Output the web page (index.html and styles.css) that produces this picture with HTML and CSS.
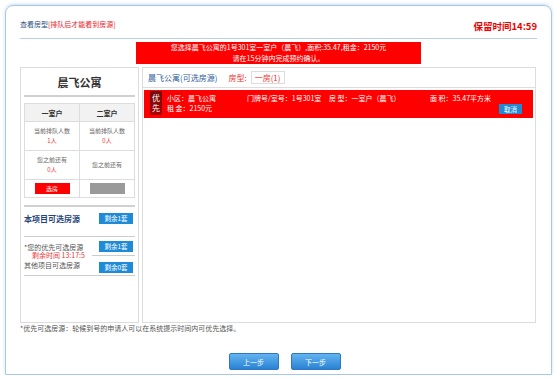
FILE: index.html
```html
<!DOCTYPE html>
<html lang="zh-CN">
<head>
    <meta charset="UTF-8">
    <meta name="viewport" content="width=device-width, initial-scale=1.0">
    <title>查看房型</title>
    <link rel="stylesheet" href="styles.css">
</head>
<body>

<div class="frame">
    <!-- Шапка: заголовок и таймер -->
    <div class="head">
        <div class="page-title">查看房型<span class="hint">[排队后才能看到房源]</span></div>
        <div class="timer">保留时间14:59</div>
    </div>

    <div class="notice">
        您选择晨飞公寓的1号301室一室户（晨飞）,面积:35.47,租金：2150元<br>
        请在15分钟内完成预约确认。
    </div>

    <div class="panels">
        <!-- Левая панель: очередь и остатки -->
        <div class="side">
            <div class="side-title">晨飞公寓</div>
            <table class="queue">
                <tr class="q-head">
                    <th>一室户</th>
                    <th>二室户</th>
                </tr>
                <tr class="q-row">
                    <td>当前排队人数<br><span class="red">1人</span></td>
                    <td>当前排队人数<br><span class="red">0人</span></td>
                </tr>
                <tr class="q-row">
                    <td>您之前还有<br><span class="red">0人</span></td>
                    <td>您之前还有</td>
                </tr>
                <tr class="q-btns">
                    <td><span class="pick">选房</span></td>
                    <td><span class="pick off"></span></td>
                </tr>
            </table>

            <div class="stock-main">
                <span>本项目可选房源</span>
                <span class="btn-blue">剩余1套</span>
            </div>
            <div class="stock-row">
                <span>*您的优先可选房源</span>
                <span class="stock-cell"><span class="btn-blue">剩余1套</span></span>
            </div>
            <div class="stock-row last">
                <span class="stock-text">
                    <span class="countdown">剩余时间 13:17:5</span>
                    <span>其他项目可选房源</span>
                </span>
                <span class="btn-blue">剩余0套</span>
            </div>
        </div>

        <!-- Правая панель: выбранные квартиры -->
        <div class="main">
            <div class="main-head">
                <span class="estate">晨飞公寓(可选房源)</span>
                <span class="type-label">房型:</span>
                <span class="type-tag">一房(1)</span>
            </div>
            <div class="room">
                <div class="badge">优<br>先</div>
                <div class="room-info">
                    <span>小区：晨飞公寓</span>
                    <span>门牌号/室号：1号301室</span>
                    <span>房 型：一室户（晨飞）</span>
                    <span>面 积：35.47平方米</span>
                    <span>租 金：2150元</span>
                    <span></span>
                    <span></span>
                    <span class="cancel-cell"><button class="cancel">取消</button></span>
                </div>
            </div>
        </div>
    </div>

    <div class="footnote">*优先可选房源：轮候到号的申请人可以在系统提示时间内可优先选择。</div>

    <div class="actions">
        <button class="step">上一步</button>
        <button class="step">下一步</button>
    </div>
</div>

</body>
</html>
```

FILE: styles.css
```css
body { margin: 0; font-family: "Noto Sans CJK SC", "Liberation Sans", sans-serif; font-size: 7px; color: #555; background: #fff; }

.frame {
    margin: 5px 0 0 5px;
    width: 547px;
    height: 370px;
    box-sizing: border-box;
    border: 1px solid #a6c8e3;
    border-radius: 8px 8px 0 0;
    padding: 0 14px;
    box-shadow: 0 -1px 3px rgba(150, 190, 225, 0.5);
}

/* Шапка */
.head {
    height: 33px;
    box-sizing: border-box;
    padding-top: 3px;
    border-bottom: 1px solid #b9cfe3;
    display: flex;
    justify-content: space-between;
    align-items: center;
}
.page-title { color: #2b4f7f; }
.page-title .hint { color: #e8232a; }
.timer { color: #e00; font-size: 9.5px; font-weight: bold; margin-top: 4px; }

.notice {
    width: 285px;
    height: 22px;
    margin: 3px auto 0;
    background: #f00;
    color: #fff;
    text-align: center;
    line-height: 11px;
}

.panels { display: flex; gap: 3px; margin-top: 3px; height: 256px; }

/* Левая панель */
.side { width: 119px; box-sizing: border-box; border: 1px solid #dcdcdc; padding: 0 3px; }
.side-title {
    padding-top: 1px;
    line-height: 26px;
    border-bottom: 2px solid #d0d0d0;
    font-size: 11px;
    font-weight: bold;
    color: #333;
    text-align: center;
}

.queue { margin-top: 6px; width: 100%; border-collapse: collapse; table-layout: fixed; }
.queue th, .queue td { border: 1px solid #ddd; text-align: center; padding: 0; font-size: 6px; line-height: 10px; color: #666; }
.queue th { background: #f2f2f2; color: #333; font-size: 7px; font-weight: bold; height: 17px; }
.queue .q-row td { height: 28px; }
.queue .q-btns td { height: 17px; }
.red { color: #e33; }
.pick { display: inline-block; width: 35px; height: 11px; line-height: 11px; background: #f00; color: #fff; vertical-align: middle; }
.pick.off { background: #9a9a9a; }

.stock-main {
    margin-top: 7px;
    border-top: 2px solid #d0d0d0;
    border-bottom: 1px solid #ccc;
    height: 32px;
    box-sizing: border-box;
    padding-bottom: 6px;
    display: flex;
    justify-content: space-between;
    align-items: center;
    font-size: 8px;
    font-weight: bold;
    color: #1f4478;
}
.btn-blue {
    display: inline-block;
    width: 34px;
    height: 11px;
    line-height: 11px;
    margin-right: 2px;
    background: #1f8bd6;
    color: #fff;
    font-size: 6.5px;
    font-weight: normal;
    text-align: center;
}

.stock-row { display: flex; justify-content: space-between; align-items: center; height: 19px; }
.stock-cell { width: 43px; height: 19px; box-sizing: border-box; border-bottom: 1px solid #ccc; display: flex; align-items: center; justify-content: flex-end; }
.stock-row.last { height: 20px; box-sizing: border-box; border-bottom: 1px solid #ccc; align-items: flex-end; padding-bottom: 2px; }
.stock-text { display: flex; flex-direction: column; line-height: 10px; align-self: flex-start; margin-top: -6px; }
.countdown { color: #e33; padding-left: 8px; }

/* Правая панель */
.main { flex: 1; border: 1px solid #dcdcdc; margin-right: 1px; }
.main-head {
    height: 19px;
    border-bottom: 1px solid #ddd;
    display: flex;
    align-items: center;
    padding-left: 5px;
    font-size: 8px;
}
.estate { color: #2f5d99; }
.type-label { color: #e33; margin-left: 11px; }
.type-tag { color: #e33; border: 1px solid #ddd; padding: 0 3px; line-height: 11px; margin-left: 4px; }

.room {
    margin: 2px 2px 0 1px;
    height: 28px;
    box-sizing: border-box;
    background: #f00;
    display: flex;
    padding: 1px 0 0 6px;
    color: #fff;
}
.badge {
    width: 12px;
    height: 24px;
    background: linear-gradient(#6e1010, #a80000);
    border-radius: 2px;
    font-size: 8px;
    line-height: 10px;
    text-align: center;
    padding-top: 2px;
    box-sizing: border-box;
}
.room-info {
    flex: 1;
    margin-left: 5px;
    padding-top: 2px;
    display: grid;
    grid-template-columns: 80px 82px 101px 1fr;
    grid-auto-rows: 10px;
    line-height: 10px;
    white-space: nowrap;
}
.cancel-cell { display: flex; justify-content: flex-end; padding-right: 11px; }
.cancel {
    width: 23px;
    height: 10px;
    margin-top: 1px;
    padding: 0;
    border: none;
    background: #1f8bd6;
    color: #fff;
    font-family: inherit;
    font-size: 6.5px;
    line-height: 10px;
}

.footnote { margin-top: 1px; line-height: 9px; }

.actions { display: flex; justify-content: center; gap: 12px; padding-left: 12px; margin-top: 20px; }
.step {
    width: 50px;
    height: 17px;
    padding: 0;
    border: 1px solid #2f78c0;
    border-radius: 2px;
    background: linear-gradient(#62b4ef, #2a82d4);
    color: #fff;
    font-family: inherit;
    font-size: 7px;
}
```
